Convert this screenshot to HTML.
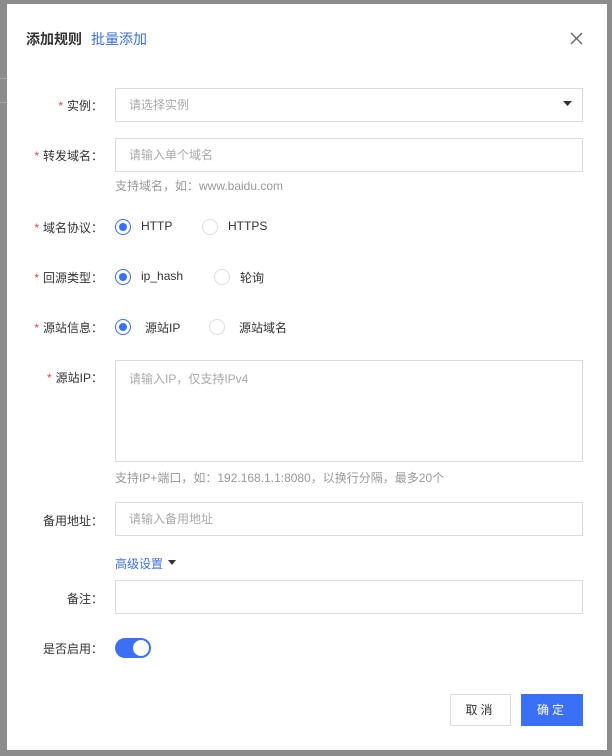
<!DOCTYPE html>
<html><head><meta charset="utf-8"><style>
*{box-sizing:border-box;margin:0;padding:0}
body{width:612px;height:756px;background:#8c8c8c;font-family:"Liberation Sans","Noto Sans CJK SC",sans-serif;font-size:12px;color:#333;position:relative;overflow:hidden}
.dlg{position:absolute;left:7px;top:4px;width:600px;height:746px;background:#fff}
.a{position:absolute}
.lbl{position:absolute;right:509px;text-align:right;white-space:nowrap;color:#333}
.lbl b{color:#e54545;font-weight:normal;margin-right:4px}
.inp{position:absolute;left:115px;width:468px;height:34px;border:1px solid #dcdcdc;color:#aaa;padding-left:13px;line-height:32px}
.hint{position:absolute;left:115px;color:#999}
.r{position:absolute;width:16px;height:16px;border-radius:50%;border:1px solid #ddd;background:#fff}
.r.on{border-color:#3a6ff7}
.r.on:after{content:"";position:absolute;left:3px;top:3px;width:8px;height:8px;border-radius:50%;background:#3a6ff7}
.t{position:absolute;color:#333}
</style></head><body>
<div class="a" style="left:0;top:78px;width:7px;height:1px;background:#aaa"></div>
<div class="a" style="left:0;top:102px;width:7px;height:1px;background:#aaa"></div>
<div class="dlg"></div>
<div class="a" style="left:26px;top:29px;font-size:14px;font-weight:bold;color:#333">添加规则</div>
<div class="a" style="left:91px;top:29px;font-size:14px;color:#3a6ff7">批量添加</div>
<svg class="a" style="left:570px;top:32px" width="13" height="13"><path d="M1 1L12 12M12 1L1 12" stroke="#666" stroke-width="1.4"/></svg>

<div class="lbl" style="top:97px"><b>*</b>实例：</div>
<div class="inp" style="top:88px">请选择实例</div>
<svg class="a" style="left:563px;top:101px" width="9" height="6"><path d="M0 0H9L4.5 5Z" fill="#333"/></svg>

<div class="lbl" style="top:147px"><b>*</b>转发域名：</div>
<div class="inp" style="top:138px">请输入单个域名</div>
<div class="hint" style="top:177px">支持域名，如：www.baidu.com</div>

<div class="lbl" style="top:219px"><b>*</b>域名协议：</div>
<div class="r on" style="left:115px;top:219px"></div><div class="t" style="left:141px;top:219px">HTTP</div>
<div class="r" style="left:202px;top:219px"></div><div class="t" style="left:228px;top:219px">HTTPS</div>

<div class="lbl" style="top:269px"><b>*</b>回源类型：</div>
<div class="r on" style="left:115px;top:269px"></div><div class="t" style="left:141px;top:269px">ip_hash</div>
<div class="r" style="left:214px;top:269px"></div><div class="t" style="left:240px;top:269px">轮询</div>

<div class="lbl" style="top:319px"><b>*</b>源站信息：</div>
<div class="r on" style="left:115px;top:319px"></div><div class="t" style="left:145px;top:319px">源站IP</div>
<div class="r" style="left:209px;top:319px"></div><div class="t" style="left:239px;top:319px">源站域名</div>

<div class="lbl" style="top:369px"><b>*</b>源站IP：</div>
<div class="inp" style="top:360px;height:102px;line-height:normal;padding-top:9px">请输入IP，仅支持IPv4</div>
<div class="hint" style="top:469px">支持IP+端口，如：192.168.1.1:8080，以换行分隔，最多20个</div>

<div class="lbl" style="top:512px">备用地址：</div>
<div class="inp" style="top:502px">请输入备用地址</div>

<div class="a" style="left:115px;top:555px;color:#3a6ff7">高级设置</div>
<svg class="a" style="left:168px;top:560px" width="8" height="5"><path d="M0 0H8L4 5Z" fill="#333"/></svg>

<div class="lbl" style="top:590px">备注：</div>
<div class="inp" style="top:580px"></div>

<div class="lbl" style="top:640px">是否启用：</div>
<div class="a" style="left:115px;top:638px;width:36px;height:20px;border-radius:10px;background:#3a6ff7"></div>
<div class="a" style="left:133px;top:640px;width:16px;height:16px;border-radius:50%;background:#fff"></div>

<div class="a" style="left:450px;top:694px;width:61px;height:32px;border:1px solid #dcdcdc;text-align:center;line-height:30px;letter-spacing:3px;color:#333">取消</div>
<div class="a" style="left:521px;top:694px;width:62px;height:32px;background:#3a6ff7;text-align:center;line-height:32px;letter-spacing:3px;color:#fff">确定</div>
</body></html>
